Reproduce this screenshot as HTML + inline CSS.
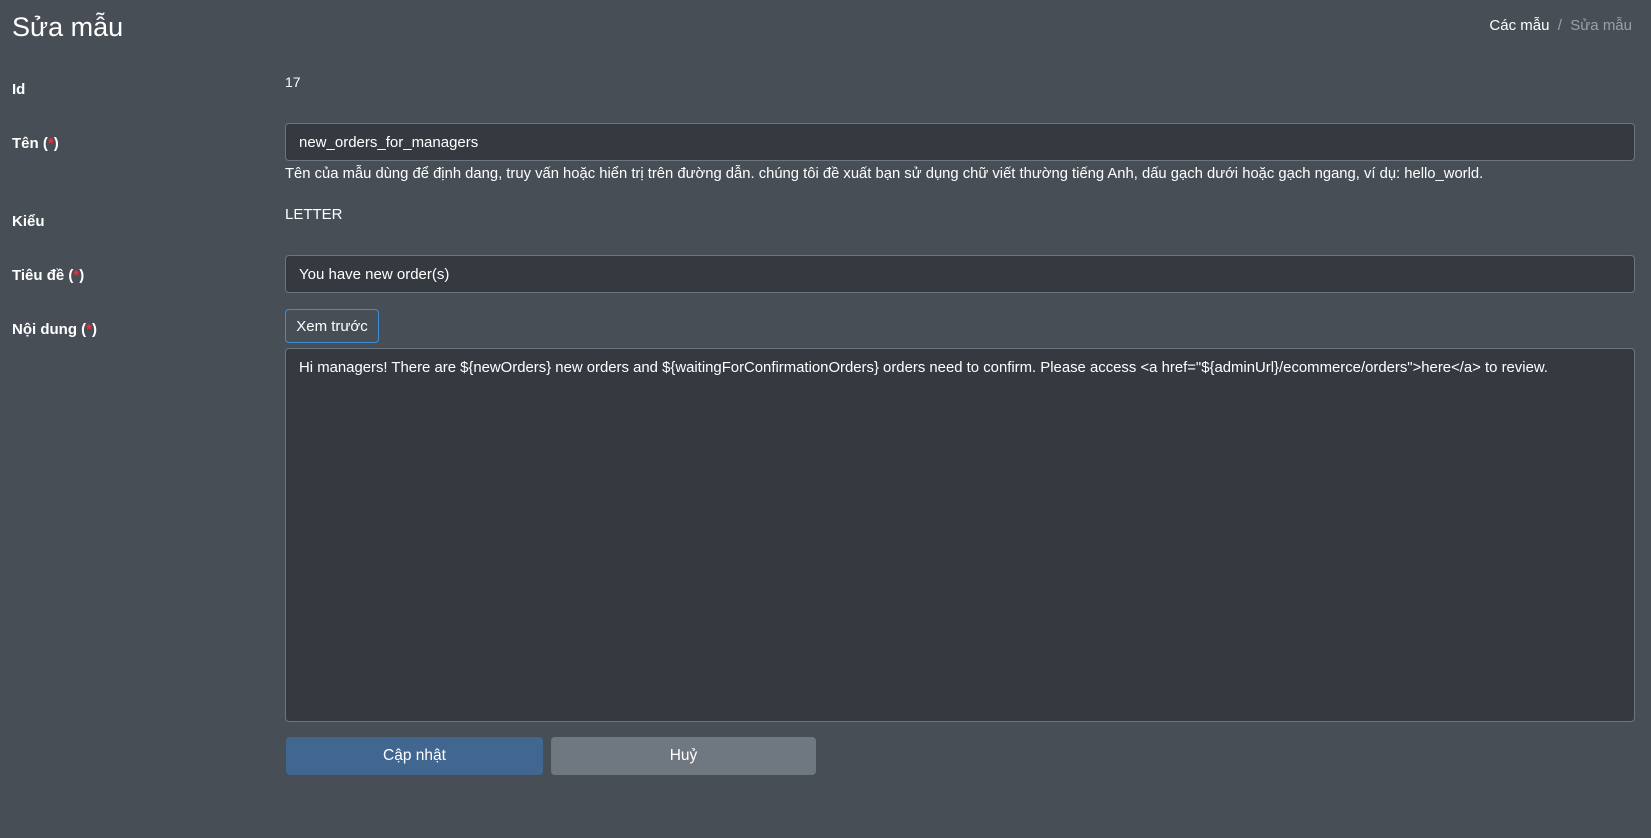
<!DOCTYPE html>
<html><head><meta charset="utf-8"><style>
*{box-sizing:border-box;margin:0;padding:0}
body{width:1651px;height:838px;background:#474e56;font-family:"Liberation Sans",sans-serif;color:#fff;position:relative;overflow:hidden;font-size:15px}
.a{position:absolute;white-space:nowrap}
h1{position:absolute;left:12px;top:12px;font-size:27px;font-weight:normal}
.lbl{position:absolute;left:12px;font-weight:bold;font-size:15px}
.r{color:#dc3545}
.inp{position:absolute;left:285px;width:1350px;height:38px;background:#343a40;border:1px solid #6c757d;border-radius:4px;padding:0 13px;line-height:38px;font-size:15px}
.btn{position:absolute;top:737px;height:38px;border-radius:4px;text-align:center;line-height:38px;font-size:15.5px}
</style></head><body>
<h1>Sửa mẫu</h1>
<div class="a" style="right:19px;top:17px;font-size:15px"><span>Các mẫu</span><span style="color:#9aa0a6"> &nbsp;/&nbsp; Sửa mẫu</span></div>
<div class="lbl" style="top:81px">Id</div>
<div class="a" style="left:285px;top:74px;font-size:14px">17</div>
<div class="lbl" style="top:135px">Tên (<span class="r">*</span>)</div>
<div class="inp" style="top:123px">new_orders_for_managers</div>
<div class="a" style="left:285px;top:166px;font-size:14.8px">Tên của mẫu dùng để định dang, truy vấn hoặc hiển trị trên đường dẫn. chúng tôi đề xuất bạn sử dụng chữ viết thường tiếng Anh, dấu gạch dưới hoặc gạch ngang, ví dụ: hello_world.</div>
<div class="lbl" style="top:213px">Kiểu</div>
<div class="a" style="left:285px;top:206px">LETTER</div>
<div class="lbl" style="top:267px">Tiêu đề (<span class="r">*</span>)</div>
<div class="inp" style="top:255px">You have new order(s)</div>
<div class="lbl" style="top:321px">Nội dung (<span class="r">*</span>)</div>
<div class="a" style="left:285px;top:309px;width:94px;height:34px;border:1px solid #3b8fd6;border-radius:4px;text-align:center;line-height:33px">Xem trước</div>
<div class="inp" style="top:348px;height:374px;line-height:normal;padding-top:11px;white-space:nowrap;font-size:14.9px">Hi managers! There are ${newOrders} new orders and ${waitingForConfirmationOrders} orders need to confirm. Please access &lt;a href="${adminUrl}/ecommerce/orders"&gt;here&lt;/a&gt; to review.</div>
<div class="btn" style="left:286px;width:257px;background:#416690">Cập nhật</div>
<div class="btn" style="left:551px;width:265px;background:#6f7780">Huỷ</div>
</body></html>
